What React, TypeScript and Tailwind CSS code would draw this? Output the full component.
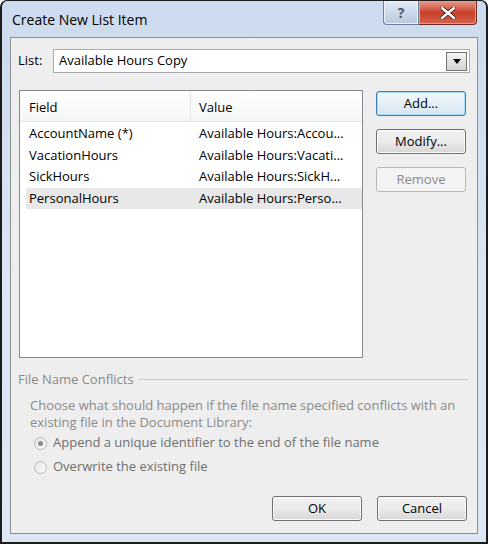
import { useState } from "react";

const rows = [
  { field: "AccountName (*)", value: "Available Hours:Accou..." },
  { field: "VacationHours", value: "Available Hours:Vacati..." },
  { field: "SickHours", value: "Available Hours:SickH..." },
  { field: "PersonalHours", value: "Available Hours:Perso..." },
];

function DlgButton({
  label,
  primary,
  disabled,
  className = "",
}: {
  label: string;
  primary?: boolean;
  disabled?: boolean;
  className?: string;
}) {
  const tone = disabled
    ? "border-[#b5b8bb] bg-[#f4f4f4] text-[#8a8a8a]"
    : primary
    ? "border-[#3c7fb1] bg-gradient-to-b from-[#f2f8fc] to-[#d6e7f3] text-black shadow-[inset_0_0_0_1px_#a9dcf6]"
    : "border-[#707070] bg-gradient-to-b from-[#f2f2f2] via-[#ebebeb] to-[#d6d6d6] text-black shadow-[inset_0_0_0_1px_#fcfcfc]";
  return (
    <button
      disabled={disabled}
      className={`h-[25px] w-[90px] rounded-[3px] border text-[13px] leading-none ${tone} ${className}`}
    >
      {label}
    </button>
  );
}

function Radio({ checked, label }: { checked?: boolean; label: string }) {
  return (
    <label className="flex h-[24px] items-center gap-[6px] text-[13px] text-[#6f6f6f]">
      <span className="flex h-[13px] w-[13px] items-center justify-center rounded-full border border-[#b9b9b9] bg-gradient-to-br from-[#e6e6e6] to-[#fafafa]">
        {checked && <span className="h-[5px] w-[5px] rounded-full bg-[#8e8e8e]" />}
      </span>
      {label}
    </label>
  );
}

export default function App() {
  const [selected, setSelected] = useState<number>(3);

  return (
    <div
      className="h-[544px] w-[488px] bg-white"
      style={{ fontFamily: '"Open Sans", "Noto Sans", sans-serif' }}
    >
      {/* window frame */}
      <div className="flex h-full flex-col rounded-t-[7px] border-x-2 border-b-2 border-t border-[#1c1c1c] bg-gradient-to-b from-[#cddbee] via-[#dbe5f3] to-[#dde7f4]">
        {/* title bar */}
        <div className="flex h-[36px] items-start justify-between pl-[10px] pr-[9px]">
          <div className="pt-[9px] text-[14px] leading-[20px] text-black">Create New List Item</div>
          <div className="flex">
            <div className="flex h-[24px] w-[36px] items-center justify-center rounded-bl-[4px] border border-t-0 border-[#6d7f99] bg-gradient-to-b from-[#e2eaf5] via-[#cdd9ea] to-[#b9c8dd] text-[14px] font-bold text-[#4a5a70] shadow-[inset_0_0_0_1px_#eef3fa]">
              ?
            </div>
            <div className="flex h-[24px] w-[58px] items-center justify-center rounded-br-[4px] border border-l-0 border-t-0 border-[#6d2a22] bg-gradient-to-b from-[#e59b8e] via-[#c9402c] to-[#d8614b] shadow-[inset_0_0_0_1px_#e7a094]">
              <svg width="16" height="12" viewBox="0 0 16 12">
                <path
                  d="M2 1 L14 11 M14 1 L2 11"
                  stroke="#3a1a16"
                  strokeWidth="4"
                  strokeLinecap="square"
                />
                <path
                  d="M2 1 L14 11 M14 1 L2 11"
                  stroke="#ffffff"
                  strokeWidth="2.4"
                  strokeLinecap="square"
                />
              </svg>
            </div>
          </div>
        </div>

        {/* client area */}
        <div className="mx-[8px] mb-[8px] flex flex-1 flex-col border border-[#8c8e92] bg-[#eeeeee] text-[13px] text-black">
          {/* list selector */}
          <div className="mt-[11px] flex items-center pl-[7px]">
            <span className="w-[35px]">List:</span>
            <div className="flex h-[24px] w-[417px] items-center justify-between border border-[#a9abaf] bg-white pl-[5px] pr-[2px]">
              <span>Available Hours Copy</span>
              <div className="flex h-[19px] w-[21px] items-center justify-center border border-[#707070] bg-gradient-to-b from-[#f2f2f2] to-[#d4d4d4]">
                <svg width="8" height="5" viewBox="0 0 8 5">
                  <path d="M0 0 H8 L4 5 Z" fill="#000" />
                </svg>
              </div>
            </div>
          </div>

          {/* fields + buttons */}
          <div className="mt-[17px] flex pl-[8px]">
            <div className="h-[268px] w-[344px] border border-[#828790] bg-white">
              <div className="flex h-[31px] border-b border-[#e3e4e6] bg-gradient-to-b from-white to-[#f5f6f7]">
                <div className="flex w-[171px] items-center border-r border-[#e3e4e6] pl-[9px] pt-[3px]">Field</div>
                <div className="flex items-center pl-[8px] pt-[3px]">Value</div>
              </div>
              <div className="pt-[1px]">
                {rows.map((r, i) => (
                  <div
                    key={r.field}
                    onClick={() => setSelected(i)}
                    className={`ml-[6px] flex h-[21.5px] items-center ${i === selected ? "bg-[#e8e8e8]" : ""}`}
                  >
                    <span className="w-[171px] pl-[3px]">{r.field}</span>
                    <span className="pl-[2px]">{r.value}</span>
                  </div>
                ))}
              </div>
            </div>
            <div className="ml-[13px] mt-[1px] flex flex-col gap-[13px]">
              <DlgButton label="Add..." primary />
              <DlgButton label="Modify..." />
              <DlgButton label="Remove" disabled />
            </div>
          </div>

          {/* file name conflicts */}
          <div className="mt-[13px] flex items-center pl-[7px] pr-[9px] text-[#8a8a8a]">
            <span className="leading-[16px]">File Name Conflicts</span>
            <span className="ml-[5px] h-px flex-1 bg-[#c9c9c9]" />
          </div>
          <div className="mt-[10px] pl-[19px] leading-[17px] text-[#8a8a8a]">
            <div>Choose what should happen if the file name specified conflicts with an</div>
            <div>existing file in the Document Library:</div>
          </div>
          <div className="flex flex-col pl-[23px]">
            <Radio checked label="Append a unique identifier to the end of the file name" />
            <Radio label="Overwrite the existing file" />
          </div>

          {/* footer */}
          <div className="mt-[17px] flex justify-end gap-[15px] pr-[10px]">
            <DlgButton label="OK" />
            <DlgButton label="Cancel" />
          </div>
        </div>
      </div>
    </div>
  );
}
